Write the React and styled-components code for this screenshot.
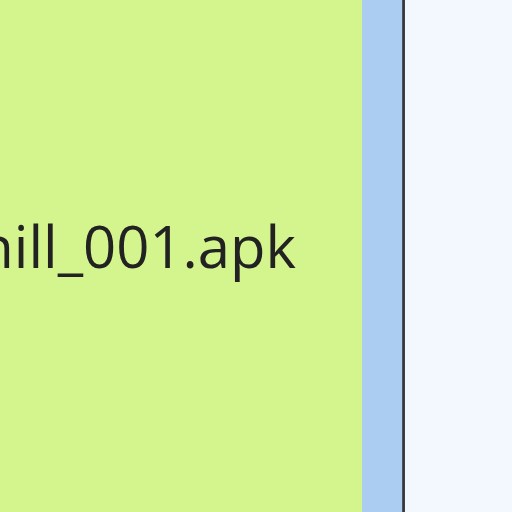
import React from "react";
import styled, { createGlobalStyle } from "styled-components";

const Global = createGlobalStyle`
  html, body { margin: 0; padding: 0; }
  body { font-family: "Open Sans", "Noto Sans", sans-serif; }
  #root { width: 512px; height: 512px; }
`;

const Page = styled.div`
  display: flex;
  width: 512px;
  height: 512px;
  overflow: hidden;
`;

const FileTile = styled.div`
  flex: 0 0 362px;
  background: #d4f48d;
  display: flex;
  align-items: center;
  justify-content: flex-end;
  padding-right: 66px;
  box-sizing: border-box;
  overflow: hidden;
`;

const FileName = styled.span`
  font-size: 58px;
  line-height: 1;
  color: #222;
  white-space: nowrap;
  padding-bottom: 20px;
`;

const Scrollbar = styled.div`
  flex: 0 0 40px;
  background: #abcdf2;
`;

const Divider = styled.div`
  flex: 0 0 3px;
  background: linear-gradient(90deg, #5a6068, #2b2f35 60%, #4a4f57);
`;

const SidePane = styled.div`
  flex: 1;
  background: #f3f8fe;
`;

export default function App() {
  return (
    <>
      <Global />
      <Page>
        <FileTile>
          <FileName>chill_001.apk</FileName>
        </FileTile>
        <Scrollbar />
        <Divider />
        <SidePane />
      </Page>
    </>
  );
}
